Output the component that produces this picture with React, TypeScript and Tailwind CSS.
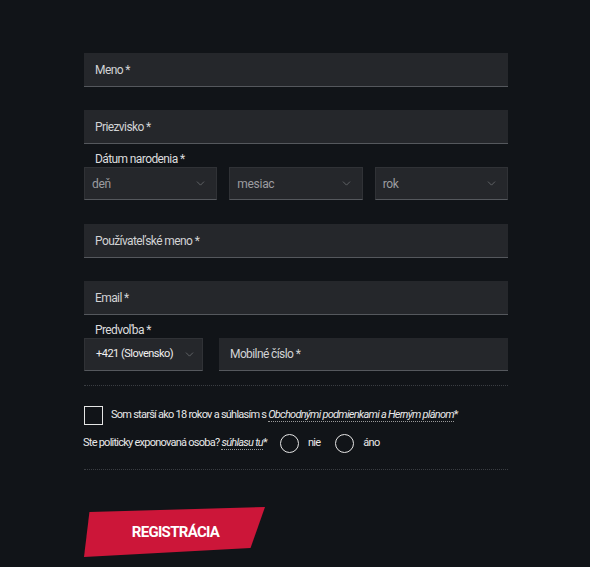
import { ChevronDown } from "lucide-react"

const font = "font-['Roboto','Liberation_Sans',sans-serif]"

function TextField({ label }: { label: string }) {
    return (
        <div className="flex h-[34px] items-center border-b border-[#55585d] bg-[#25272b] px-[11px] text-[12px] tracking-[-0.6px] text-[#d2d3d5]">
            {label}
        </div>
    )
}

// size / padding classes come from the caller so they don't fight each other
function SelectBox({ value, className }: { value: string; className: string }) {
    return (
        <div
            className={`flex h-[33px] items-center justify-between whitespace-nowrap border border-[#303236] border-b-[#55585d] bg-[#25272b] ${className}`}
        >
            <span>{value}</span>
            <ChevronDown className="h-[13px] w-[13px] shrink-0 text-[#7a7c80]" strokeWidth={1.25} />
        </div>
    )
}

const dateSelect = "pl-[7px] pr-[9px] text-[12px] tracking-[-0.3px] text-[#9c9da0]"

function Radio({ label }: { label: string }) {
    return (
        <label className="flex items-center gap-[9px]">
            <span className="h-[19px] w-[19px] rounded-full border-[1.5px] border-[#e5e5e5]" />
            <span>{label}</span>
        </label>
    )
}

export default function App() {
    return (
        <div className={`min-h-[567px] w-full bg-[#111418] ${font}`}>
            <form className="ml-[84px] w-[424px] pt-[53px]">
                <TextField label="Meno *" />
                <div className="mt-[23px]">
                    <TextField label="Priezvisko *" />
                </div>

                <div className="mt-[8px] pl-[11px] text-[12px] leading-[14px] tracking-[-0.6px] text-[#dcdcde]">
                    Dátum narodenia *
                </div>
                <div className="mt-[1px] grid grid-cols-3 gap-[12px]">
                    <SelectBox value="deň" className={dateSelect} />
                    <SelectBox value="mesiac" className={dateSelect} />
                    <SelectBox value="rok" className={dateSelect} />
                </div>

                <div className="mt-[24px]">
                    <TextField label="Používateľské meno *" />
                </div>
                <div className="mt-[23px]">
                    <TextField label="Email *" />
                </div>

                <div className="mt-[8px] pl-[11px] text-[12px] leading-[14px] tracking-[-0.6px] text-[#dcdcde]">
                    Predvoľba *
                </div>
                <div className="mt-[1px] flex gap-[16px]">
                    <SelectBox
                        value="+421 (Slovensko)"
                        className="w-[119px] shrink-0 pl-[11px] pr-[6px] text-[11px] tracking-[-0.5px] text-[#f0f0f0]"
                    />
                    <div className="flex-1">
                        <div className="flex h-[33px] items-center border-b border-[#55585d] bg-[#25272b] px-[11px] text-[12px] tracking-[-0.6px] text-[#d2d3d5]">
                            Mobilné číslo *
                        </div>
                    </div>
                </div>

                <div className="mt-[14px] border-t border-dotted border-[#3b3e43]" />

                <div className="mt-[20px] flex items-center gap-[8px] whitespace-nowrap text-[11px] tracking-[-0.75px] text-[#e8e8e8]">
                    <span className="h-[19px] w-[19px] shrink-0 border-[1.5px] border-[#e5e5e5]" />
                    <span>
                        Som starší ako 18 rokov a súhlasím s{" "}
                        <span className="border-b border-dotted border-[#9a9a9a] italic">
                            Obchodnými podmienkami a Herným plánom
                        </span>
                        *
                    </span>
                </div>

                <div className="-ml-[1px] mt-[9px] flex items-center whitespace-nowrap text-[11px] tracking-[-0.75px] text-[#e8e8e8]">
                    <span>
                        Ste politicky exponovaná osoba?{" "}
                        <span className="border-b border-dotted border-[#9a9a9a] italic">súhlasu tu</span>*
                    </span>
                    <div className="ml-[13px] flex items-center gap-[15px]">
                        <Radio label="nie" />
                        <Radio label="áno" />
                    </div>
                </div>

                <div className="mt-[16px] border-t border-dotted border-[#3b3e43]" />

                <button
                    type="button"
                    className="mt-[37px] flex h-[50px] w-[181px] items-center justify-center bg-[#cc1639] pl-[2px] text-[15px] font-bold tracking-[-0.7px] text-white [clip-path:polygon(3%_10%,100%_0,92%_82%,0_100%)]"
                >
                    REGISTRÁCIA
                </button>
            </form>
        </div>
    )
}
